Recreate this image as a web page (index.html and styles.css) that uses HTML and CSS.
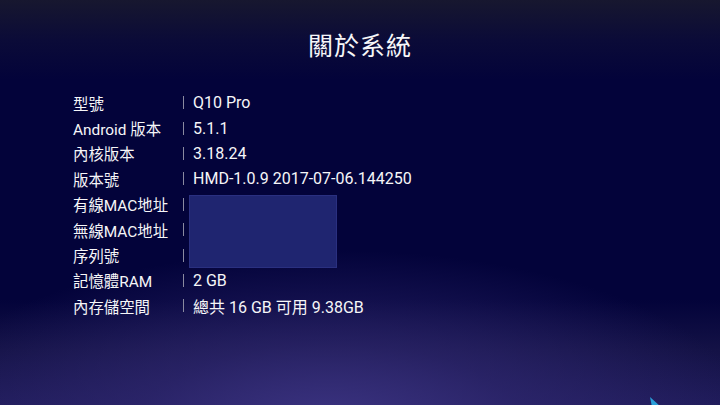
FILE: index.html
```html
<!DOCTYPE html>
<html lang="zh-Hant">
<head>
<meta charset="utf-8">
<link rel="stylesheet" href="styles.css">
</head>
<body>
<div class="screen">
  <h1 class="title">關於系統</h1>
  <div class="info">
    <div class="row"><span class="label">型號</span><span class="sep"></span><span class="value">Q10 Pro</span></div>
    <div class="row"><span class="label">Android 版本</span><span class="sep"></span><span class="value">5.1.1</span></div>
    <div class="row"><span class="label">內核版本</span><span class="sep"></span><span class="value">3.18.24</span></div>
    <div class="row"><span class="label">版本號</span><span class="sep"></span><span class="value">HMD-1.0.9 2017-07-06.144250</span></div>
    <div class="row"><span class="label">有線MAC地址</span><span class="sep"></span><span class="value"></span></div>
    <div class="row"><span class="label">無線MAC地址</span><span class="sep"></span><span class="value"></span></div>
    <div class="row"><span class="label">序列號</span><span class="sep"></span><span class="value"></span></div>
    <div class="row"><span class="label">記憶體RAM</span><span class="sep"></span><span class="value">2 GB</span></div>
    <div class="row"><span class="label">內存儲空間</span><span class="sep"></span><span class="value">總共 16 GB 可用 9.38GB</span></div>
    <div class="mask"></div>
  </div>
  <svg class="cursor" width="14" height="10" viewBox="0 0 14 10"><path d="M1 0 L12 10 L3 10 Z" fill="#2a9fd8"/></svg>
</div>
</body>
</html>
```
FILE: styles.css
```css
html, body {
  margin: 0;
  padding: 0;
}
body {
  width: 720px;
  height: 405px;
  overflow: hidden;
  font-family: Roboto, "Noto Sans CJK TC", sans-serif;
  color: #f6f6f8;
}
.screen {
  position: relative;
  width: 720px;
  height: 405px;
  background:
    radial-gradient(ellipse 420px 170px at 330px 420px, rgba(60,52,130,0.95) 0%, rgba(50,42,115,0.6) 45%, rgba(20,16,70,0) 100%),
    linear-gradient(to bottom, #17172f 0px, #0b0b38 40px, #03033a 80px, #03033a 300px, #141246 350px, #1f1b5a 405px);
  overflow: hidden;
}
.title {
  margin: 0;
  padding-top: 29px;
  text-align: center;
  font-family: "Noto Sans CJK TC", sans-serif;
  font-weight: 400;
  font-size: 25px;
  line-height: 30px;
  letter-spacing: 1px;
}
.info {
  position: relative;
  margin-top: 31px;
  padding-left: 73px;
  display: flex;
  flex-direction: column;
}
.row {
  display: flex;
  align-items: center;
  height: 25.4px;
  font-size: 15.4px;
}
.label {
  width: 110px;
  white-space: nowrap;
}
.sep {
  width: 1px;
  height: 13px;
  background: #8a8aa0;
  margin-right: 9px;
}
.value {
  white-space: nowrap;
  font-size: 16px;
}
.mask {
  position: absolute;
  left: 189px;
  top: 105px;
  width: 148px;
  height: 73px;
  background: #1f2570;
  box-shadow: inset 0 0 0 1px #2a3080;
}
.cursor {
  position: absolute;
  left: 649px;
  top: 397px;
}
```
